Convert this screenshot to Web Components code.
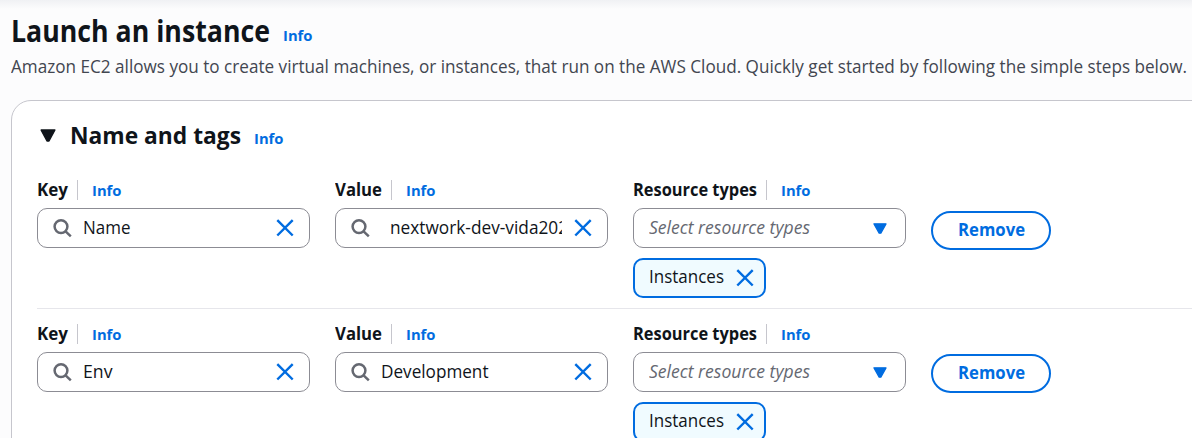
<!DOCTYPE html>
<html lang="en">
<head>
<meta charset="utf-8">
<title>Launch an instance</title>
<style>
html, body { margin: 0; height: 100%; overflow: hidden; background: #fcfcfd; }
body { font-family: "Open Sans", "Noto Sans", sans-serif; color: #0f141a; }
</style>
</head>
<body>
<launch-page></launch-page>
<script>
const define = (name, html, setup) => customElements.define(name, class extends HTMLElement {
  connectedCallback() {
    if (this.shadowRoot) return;
    const root = this.attachShadow({ mode: 'open' });
    const t = document.createElement('template');
    t.innerHTML = typeof html === 'function' ? html(this) : html;
    root.append(t.content.cloneNode(true));
    if (setup) setup(this, root);
  }
});

/* One line of text, condensed or widened to a set measure. */
define('text-run', `<style>
  :host { display: block; flex: none; white-space: nowrap; }
  span { display: inline-block; vertical-align: top; transform-origin: 0 50%; }
</style><span><slot></slot></span>`, (el, root) => {
  const span = root.querySelector('span');
  const w = +el.getAttribute('w');
  el.style.width = w + 'px';
  span.style.transform = `scaleX(${w / span.getBoundingClientRect().width})`;
});

define('info-link', `<style>
  :host { display: block; flex: none; color: #006ce0; font-size: 14.8px; line-height: 20px; font-weight: 700; }
</style><text-run w="29.5">Info</text-run>`);

define('close-icon', `<style>:host { display: block; flex: none; width: 20px; height: 20px; } svg { display: block; }</style>
<svg width="20" height="20" viewBox="0 0 20 20" fill="none" stroke="#006ce0" stroke-width="2.4"><path d="M2.3 2.1 17.7 17.5M17.7 2.1 2.3 17.5"/></svg>`);

define('search-icon', `<style>:host { display: block; flex: none; width: 20px; height: 20px; } svg { display: block; }</style>
<svg width="20" height="20" viewBox="0 0 20 20" fill="none" stroke="#656871" stroke-width="2.5"><circle cx="8" cy="8.6" r="6.4"/><path d="m12.6 13.3 5.2 5"/></svg>`);

define('caret-icon', el => `<style>:host { display: block; flex: none; } svg { display: block; }</style>
<svg width="${el.getAttribute('w')}" height="${el.getAttribute('h')}" viewBox="0 0 16 13" preserveAspectRatio="none" fill="currentColor" stroke="currentColor" stroke-width="1.4" stroke-linejoin="round"><path d="M1.1 1H14.9L9 12H7Z"/></svg>`);

define('field-label', el => `<style>
  :host { display: flex; align-items: center; height: 20px; font-size: 17.3px; line-height: 20px; font-weight: 700; }
  i { width: 1px; height: 20px; background: #c6c6cd; margin: 0 14px 0 9px; }
</style><text-run w="${el.getAttribute('w')}">${el.getAttribute('text')}</text-run><i></i><info-link></info-link>`);

define('search-field', el => `<style>
  :host { display: flex; align-items: center; box-sizing: border-box; width: 273px; height: 40px; margin-top: 8px;
    border: 1px solid #8c8c94; border-radius: 10px; background: #fff; padding: 0 14px 0 15px; font-size: 17.3px; line-height: 38px; }
  .value { flex: 1; overflow: hidden; height: 38px; margin: 0 11px 0 ${el.getAttribute('indent') || 10}px; }
</style><search-icon></search-icon><div class="value"><text-run w="${el.getAttribute('w')}">${el.getAttribute('value')}</text-run></div><close-icon></close-icon>`);

define('select-field', `<style>
  :host { display: flex; align-items: center; justify-content: space-between; box-sizing: border-box; width: 273px; height: 40px; margin-top: 8px;
    border: 1px solid #8c8c94; border-radius: 10px; background: #fff; padding: 0 18px 0 15px; font-size: 17.3px; line-height: 38px; color: #656871; }
  text-run { font-style: italic; }
  caret-icon { color: #006ce0; }
</style><text-run w="161">Select resource types</text-run><caret-icon w="14" h="11"></caret-icon>`);

define('filter-token', `<style>
  :host { display: flex; align-items: center; box-sizing: border-box; width: 133px; height: 40px; margin-top: 10px; gap: 11px;
    border: 2px solid #006ce0; border-radius: 10px; background: #f0fbff; padding-left: 14px; font-size: 17.3px; line-height: 34px; }
  text-run { margin-top: -2px; }
</style><text-run w="75">Instances</text-run><close-icon></close-icon>`);

define('pill-button', `<style>
  :host { display: flex; align-items: center; justify-content: center; box-sizing: border-box; width: 120px; height: 39px;
    border: 2px solid #006ce0; border-radius: 20px; background: #fff; color: #006ce0; font-size: 17.3px; line-height: 34px; font-weight: 700; }
  text-run { margin-top: -1px; }
</style><text-run w="67">Remove</text-run>`);

define('tag-row', el => `<style>
  :host { display: grid; grid-template-columns: repeat(3, 273px) 120px; column-gap: 25px; height: 128px; align-items: start; }
  pill-button { margin-top: ${el.getAttribute('btn')}px; }
</style>
<div><field-label text="Key" w="31"></field-label><search-field value="${el.getAttribute('key')}" w="${el.getAttribute('kw')}"></search-field></div>
<div><field-label text="Value" w="47"></field-label><search-field value="${el.getAttribute('value')}" w="${el.getAttribute('vw')}" indent="${el.getAttribute('indent')}"></search-field></div>
<div><field-label text="Resource types" w="124"></field-label><select-field></select-field><filter-token></filter-token></div>
<pill-button></pill-button>`);

define('tags-card', `<style>
  :host { display: block; box-sizing: border-box; width: 1230px; height: 420px; border: 1px solid #c6c6cd; border-radius: 20px; background: #fff; padding: 19px 0 0 25px; }
  header { display: flex; height: 30px; align-items: center; }
  caret-icon { margin: 0 14px 0 2.5px; }
  h2 { margin: 0; font-size: 23.5px; line-height: 30px; }
  info-link { margin: 6px 0 0 13px; }
  tag-row { margin-top: 30px; }
  hr { border: 0; height: 1px; background: #e6e6eb; margin: 0; }
  hr + tag-row { margin-top: 15px; }
</style>
<header><caret-icon w="16" h="13"></caret-icon><h2><text-run w="171">Name and tags</text-run></h2><info-link></info-link></header>
<tag-row key="Name" kw="47.5" value="nextwork-dev-vida2025" vw="188" indent="19" btn="31"></tag-row>
<hr>
<tag-row key="Env" kw="29.5" value="Development" vw="107.5" indent="10" btn="30"></tag-row>`);

define('launch-page', `<style>
  :host { display: block; box-sizing: border-box; height: 438px; overflow: hidden; padding: 11px 0 0 11px;
    background: linear-gradient(#f0f1f4, #fcfcfd 9px) no-repeat 0 0 / 100% 9px, #fcfcfd; }
  .title { display: flex; align-items: center; height: 40px; }
  h1 { margin: 0; font-size: 29.5px; line-height: 40px; }
  info-link { margin: 8px 0 0 13px; }
  p { margin: 4px 0 21px; height: 24px; font-size: 17.3px; line-height: 24px; color: #424650; }
</style>
<div class="title"><h1><text-run w="259">Launch an instance</text-run></h1><info-link></info-link></div>
<p><text-run w="1176">Amazon EC2 allows you to create virtual machines, or instances, that run on the AWS Cloud. Quickly get started by following the simple steps below.</text-run></p>
<tags-card></tags-card>`);
</script>
</body>
</html>
